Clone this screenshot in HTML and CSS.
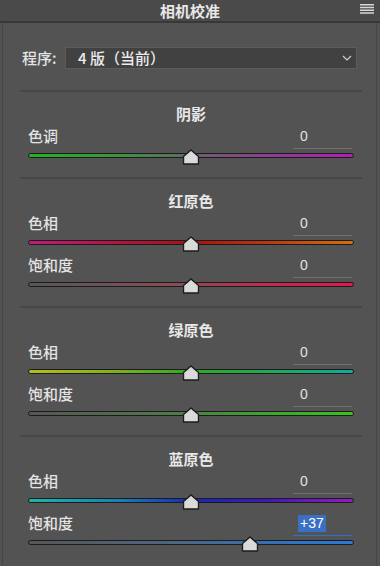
FILE: index.html
```html
<!DOCTYPE html>
<html lang="zh-CN">
<head>
<meta charset="utf-8">
<title>相机校准</title>
<link rel="stylesheet" href="styles.css">
</head>
<body>
<div class="panel">
  <header class="titlebar">
    <h1 class="title">相机校准</h1>
    <svg class="menu" width="14" height="10" viewBox="0 0 14 10" aria-hidden="true">
      <path d="M0 0.75H14M0 3.5H14M0 6.25H14M0 9H14" stroke="#d6d6d6" stroke-width="1.3" fill="none"/>
    </svg>
  </header>
  <div class="frame">
    <div class="content">
      <div class="process">
        <span class="process-label">程序:</span>
        <div class="select">
          <span class="select-text">4 版（当前）</span>
          <svg class="chevron" width="10" height="6" viewBox="0 0 10 6" aria-hidden="true">
            <path d="M1 1L5 5L9 1" stroke="#cfcfcf" stroke-width="1.2" fill="none"/>
          </svg>
        </div>
      </div>

      <section class="group">
        <h2 class="group-title">阴影</h2>
        <div class="slider">
          <div class="slider-head"><span class="slider-label">色调</span><span class="slider-value">0</span></div>
          <div class="slider-body">
            <div class="track track-tint"></div>
            <div class="rail"><svg class="thumb" style="left:50%" width="17" height="16" viewBox="0 0 17 16"><path d="M1 15V7.5L8.5 1L16 7.5V15Z" fill="#dadada" stroke="#1c1c1c" stroke-width="1.4" stroke-linejoin="round"/></svg></div>
          </div>
        </div>
      </section>

      <section class="group">
        <h2 class="group-title">红原色</h2>
        <div class="slider">
          <div class="slider-head"><span class="slider-label">色相</span><span class="slider-value">0</span></div>
          <div class="slider-body">
            <div class="track track-red-hue"></div>
            <div class="rail"><svg class="thumb" style="left:50%" width="17" height="16" viewBox="0 0 17 16"><path d="M1 15V7.5L8.5 1L16 7.5V15Z" fill="#dadada" stroke="#1c1c1c" stroke-width="1.4" stroke-linejoin="round"/></svg></div>
          </div>
        </div>
        <div class="slider">
          <div class="slider-head"><span class="slider-label">饱和度</span><span class="slider-value">0</span></div>
          <div class="slider-body">
            <div class="track track-red-sat"></div>
            <div class="rail"><svg class="thumb" style="left:50%" width="17" height="16" viewBox="0 0 17 16"><path d="M1 15V7.5L8.5 1L16 7.5V15Z" fill="#dadada" stroke="#1c1c1c" stroke-width="1.4" stroke-linejoin="round"/></svg></div>
          </div>
        </div>
      </section>

      <section class="group">
        <h2 class="group-title">绿原色</h2>
        <div class="slider">
          <div class="slider-head"><span class="slider-label">色相</span><span class="slider-value">0</span></div>
          <div class="slider-body">
            <div class="track track-green-hue"></div>
            <div class="rail"><svg class="thumb" style="left:50%" width="17" height="16" viewBox="0 0 17 16"><path d="M1 15V7.5L8.5 1L16 7.5V15Z" fill="#dadada" stroke="#1c1c1c" stroke-width="1.4" stroke-linejoin="round"/></svg></div>
          </div>
        </div>
        <div class="slider">
          <div class="slider-head"><span class="slider-label">饱和度</span><span class="slider-value">0</span></div>
          <div class="slider-body">
            <div class="track track-green-sat"></div>
            <div class="rail"><svg class="thumb" style="left:50%" width="17" height="16" viewBox="0 0 17 16"><path d="M1 15V7.5L8.5 1L16 7.5V15Z" fill="#dadada" stroke="#1c1c1c" stroke-width="1.4" stroke-linejoin="round"/></svg></div>
          </div>
        </div>
      </section>

      <section class="group">
        <h2 class="group-title">蓝原色</h2>
        <div class="slider">
          <div class="slider-head"><span class="slider-label">色相</span><span class="slider-value">0</span></div>
          <div class="slider-body">
            <div class="track track-blue-hue"></div>
            <div class="rail"><svg class="thumb" style="left:50%" width="17" height="16" viewBox="0 0 17 16"><path d="M1 15V7.5L8.5 1L16 7.5V15Z" fill="#dadada" stroke="#1c1c1c" stroke-width="1.4" stroke-linejoin="round"/></svg></div>
          </div>
        </div>
        <div class="slider">
          <div class="slider-head"><span class="slider-label">饱和度</span><span class="slider-value slider-value-active"><span class="selected">+37</span></span></div>
          <div class="slider-body">
            <div class="track track-blue-sat"></div>
            <div class="rail"><svg class="thumb" style="left:68.5%" width="17" height="16" viewBox="0 0 17 16"><path d="M1 15V7.5L8.5 1L16 7.5V15Z" fill="#dadada" stroke="#1c1c1c" stroke-width="1.4" stroke-linejoin="round"/></svg></div>
          </div>
        </div>
      </section>
    </div>
  </div>
</div>
</body>
</html>
```

FILE: styles.css
```css
* {
  box-sizing: border-box;
  margin: 0;
  padding: 0;
}

html,
body {
  width: 380px;
  height: 566px;
  overflow: hidden;
}

body {
  background: #535353;
  font-family: "Noto Sans CJK SC", "Noto Sans", sans-serif;
  color: #e4e4e4;
}

.panel {
  height: 566px;
  display: flex;
  flex-direction: column;
}

.titlebar {
  height: 23px;
  flex: none;
  background: #4a4a4a;
  border-bottom: 2px solid #383838;
  display: grid;
  grid-template-columns: 1fr auto 1fr;
  align-items: center;
}

.title {
  grid-column: 2;
  font-size: 15px;
  font-weight: 700;
  line-height: 21px;
  color: #e8e8e8;
}

.menu {
  grid-column: 3;
  justify-self: end;
  margin-right: 6px;
  margin-top: -3px;
}

.frame {
  flex: 1;
  margin: 0 3px 0 2px;
  border-left: 1px solid #454545;
  border-right: 1px solid #454545;
}

.content {
  padding: 24px 14px 0 17px;
}

.process {
  display: flex;
  align-items: center;
  height: 22px;
  padding-left: 2px;
  margin-bottom: 21px;
}

.process-label {
  width: 43px;
  font-size: 15px;
  font-weight: 500;
  line-height: 22px;
}

.select {
  width: 292px;
  height: 22px;
  border: 1px solid #5c5c5c;
  background: #414141;
  display: flex;
  align-items: center;
  justify-content: space-between;
  padding: 0 4px 0 12px;
}

.select-text {
  font-size: 15px;
  font-weight: 500;
  line-height: 20px;
  color: #ececec;
}

.group {
  border-top: 2px solid #474747;
  padding: 12px 8px 12px;
}

.group-title {
  font-size: 15px;
  font-weight: 700;
  line-height: 20px;
  text-align: center;
  margin-bottom: 2px;
  color: #e8e8e8;
}

.slider + .slider {
  margin-top: 3px;
}

.slider-head {
  display: flex;
  justify-content: space-between;
  align-items: flex-start;
  height: 23px;
}

.slider-label {
  font-size: 15px;
  font-weight: 500;
  line-height: 20px;
}

.slider-value {
  width: 59px;
  height: 23px;
  margin-right: 2px;
  padding-left: 7px;
  border-bottom: 1px solid #707070;
  font-family: "Liberation Sans", Arial, sans-serif;
  font-size: 14px;
  line-height: 20px;
  color: #e2e2e2;
}

.slider-value-active {
  border-bottom-color: #2f6fd0;
  padding-left: 5px;
}

.selected {
  display: inline-block;
  background: #3a70c4;
  color: #ffffff;
  padding: 0 2px;
  line-height: 17px;
  margin-top: 1px;
}

.slider-body {
  position: relative;
  height: 16px;
}

.track {
  position: relative;
  top: 4px;
  height: 5px;
  border: 1px solid #1b1b1b;
  border-radius: 3px;
}

.rail {
  position: absolute;
  left: 4px;
  right: 4px;
  top: 0;
  height: 16px;
}

.thumb {
  position: absolute;
  top: 0;
  transform: translateX(-50%);
  display: block;
}

.track-tint {
  background: linear-gradient(90deg, #22b222 0%, #3b963b 25%, #5e6e5e 48%, #6e5e6e 52%, #8e3e92 75%, #b01fb4 100%);
}

.track-red-hue {
  background: linear-gradient(90deg, #c21a7a 0%, #b3123e 30%, #a81212 50%, #b83412 72%, #d2700f 100%);
}

.track-red-sat {
  background: linear-gradient(90deg, #565656 0%, #8a4c58 45%, #c42a4c 75%, #e0184a 100%);
}

.track-green-hue {
  background: linear-gradient(90deg, #b8bc1a 0%, #7cb01e 28%, #2eaa24 50%, #1eaa58 75%, #14a8a0 100%);
}

.track-green-sat {
  background: linear-gradient(90deg, #565656 0%, #4e7a48 45%, #3ca82a 75%, #38c21c 100%);
}

.track-blue-hue {
  background: linear-gradient(90deg, #18b8a8 0%, #1880b4 28%, #1828b8 50%, #3a1ab8 72%, #9a18c0 100%);
}

.track-blue-sat {
  background: linear-gradient(90deg, #565656 0%, #4e6680 45%, #3470b8 75%, #2a78d8 100%);
}
```
